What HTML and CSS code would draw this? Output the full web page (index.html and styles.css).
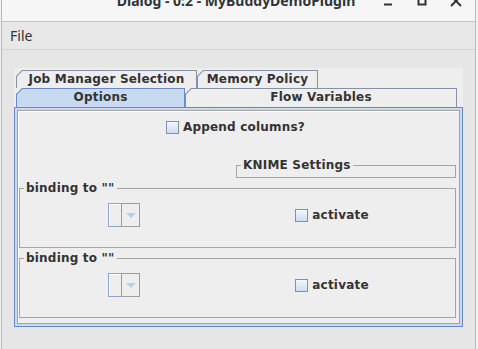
FILE: index.html
```html
<!DOCTYPE html>
<html lang="en">
<head>
    <meta charset="UTF-8">
    <meta name="viewport" content="width=device-width, initial-scale=1.0">
    <title>Dialog - 0:2 - MyBuddyDemoPlugin</title>
    <link rel="stylesheet" href="styles.css">
</head>
<body>
    <div class="window">
        <div class="titlebar">
            <span class="title">Dialog - 0:2 - MyBuddyDemoPlugin</span>
            <div class="controls">
                <svg class="ctl ctl-min" width="16" height="16" viewBox="0 0 16 16"><rect x="4" y="10.5" width="8" height="2" fill="#2e3436"/></svg>
                <svg class="ctl ctl-max" width="16" height="16" viewBox="0 0 16 16"><rect x="4.5" y="5" width="7" height="6.5" fill="none" stroke="#2e3436" stroke-width="2"/></svg>
                <svg class="ctl ctl-close" width="16" height="16" viewBox="0 0 16 16"><path d="M3 3 L13 13 M13 3 L3 13" stroke="#2e3436" stroke-width="2"/></svg>
            </div>
        </div>

        <div class="menubar">
            <span class="menu">File</span>
        </div>

        <div class="client">
            <div class="tabpane">
                <div class="tabrow">
                    <div class="tab tab-jobs"><span>Job Manager Selection</span></div>
                    <div class="tab tab-memory"><span>Memory Policy</span></div>
                </div>
                <div class="tabrow">
                    <div class="tab tab-options selected"><span>Options</span></div>
                    <div class="tab tab-flow"><span>Flow Variables</span></div>
                </div>

                <div class="tabbody">
                    <div class="panel">
                        <div class="append-row">
                            <label class="check"><span class="box"></span>Append columns?</label>
                        </div>

                        <div class="group knime">
                            <div class="group-title">KNIME Settings</div>
                        </div>

                        <div class="group binding">
                            <div class="group-title">binding to ""</div>
                            <div class="cells">
                                <div class="cell">
                                    <div class="combo"><span class="combo-field"></span><span class="combo-btn"><span class="arrow"></span></span></div>
                                </div>
                                <div class="cell">
                                    <label class="check"><span class="box"></span>activate</label>
                                </div>
                            </div>
                        </div>

                        <div class="group binding">
                            <div class="group-title">binding to ""</div>
                            <div class="cells">
                                <div class="cell">
                                    <div class="combo"><span class="combo-field"></span><span class="combo-btn"><span class="arrow"></span></span></div>
                                </div>
                                <div class="cell">
                                    <label class="check"><span class="box"></span>activate</label>
                                </div>
                            </div>
                        </div>
                    </div>
                </div>
            </div>
        </div>
    </div>
</body>
</html>
```

FILE: styles.css
```css
body {
    margin: 0;
    background-color: #f2f2f2;
    overflow: hidden;
}

.window {
    margin-left: 1px;
    width: 473px;
    height: 349px;
    border-left: 1px solid #b9b9b9;
    border-right: 1px solid #b9b9b9;
    background-color: #e6e6e6;
    display: flex;
    flex-direction: column;
}

/* title bar (clipped at the top) */
.titlebar {
    height: 21px;
    background-color: #f6f6f6;
    border-bottom: 1px solid #c4c4c4;
    display: flex;
    overflow: hidden;
}

.title {
    flex: 1;
    text-align: center;
    font-family: "Noto Sans", sans-serif;
    font-size: 14px;
    font-weight: bold;
    line-height: 20px;
    color: #2e3436;
    margin-top: -9px;
    padding-left: 90px;
    white-space: nowrap;
}

.controls {
    display: flex;
    gap: 18px;
    margin-top: -7px;
    padding-right: 11px;
}

.ctl {
    display: block;
}

.menubar {
    height: 27px;
    background-color: #e8e8e8;
    border-bottom: 1px solid #d2d2d2;
    display: flex;
    align-items: center;
}

.menu {
    font-family: "Noto Sans", sans-serif;
    font-size: 14px;
    color: #333;
    margin-left: 8px;
}

.client {
    flex: 1;
    padding: 18px 0 0 12px;
}

/* tabbed pane */
.tabpane {
    width: 449px;
    height: 259px;
    background-color: #eeeeee;
    padding-top: 2px;
    box-sizing: border-box;
    font-family: "DejaVu Sans", sans-serif;
    font-size: 12px;
    font-weight: bold;
    letter-spacing: 0.2px;
    color: #333;
}

.tabrow {
    display: flex;
    padding-left: 2px;
}

.tab {
    height: 18px;
    padding: 1px 1px 0 1px;
    box-sizing: border-box;
    background-color: #8192ab;
    clip-path: polygon(6px 0, 100% 0, 100% 100%, 0 100%, 0 6px);
}

.tab span {
    display: block;
    height: 100%;
    background-color: #eeeeee;
    clip-path: polygon(5.5px 0, 100% 0, 100% 100%, 0 100%, 0 5.5px);
    text-align: center;
    line-height: 17px;
}

.tab-jobs { width: 181px; }
.tab-memory { width: 121px; }
.tab-options { width: 169px; height: 19px; }
.tab-flow { width: 272px; height: 19px; }

.tab.selected {
    background-color: #6a8ac6;
}

.tab.selected span {
    background-color: #c8daf0;
}

.tabbody {
    height: 220px;
    box-sizing: border-box;
    border: 1px solid #6a8ac6;
    background-color: #c8daf0;
    padding: 2px;
}

.panel {
    height: 100%;
    box-sizing: border-box;
    border: 1px solid #a3a3a3;
    box-shadow: inset 1px 1px 0 #ffffff;
    background-color: #eeeeee;
    padding: 0 3px 0 1px;
}

.append-row {
    display: flex;
    justify-content: center;
    margin-top: 9px;
    height: 15px;
    padding-right: 4px;
}

.check {
    display: flex;
    align-items: center;
    gap: 4px;
    line-height: 15px;
}

.box {
    width: 13px;
    height: 13px;
    box-sizing: border-box;
    border: 1px solid #7e92ad;
    background: linear-gradient(#f4f7fb, #cddcee);
}

/* titled borders */
.group {
    border: 1px solid #a5a5a5;
    box-sizing: border-box;
}

.group-title {
    width: fit-content;
    height: 15px;
    line-height: 15px;
    margin: -8px 0 0 4px;
    padding: 0 2px;
    background-color: #eeeeee;
}

.knime {
    width: 220px;
    height: 13px;
    margin: 30px 0 0 auto;
}

.binding {
    height: 60px;
    margin-top: 10px;
}

.cells {
    display: grid;
    grid-template-columns: 208px 208px;
    margin-top: 7px;
    height: 24px;
}

.cell {
    display: flex;
    justify-content: center;
    align-items: center;
}

.combo {
    display: flex;
    width: 32px;
    height: 24px;
}

.combo-field {
    width: 12px;
    border: 1px solid #8ca6cb;
    border-right: none;
    box-shadow: inset 1px 1px 0 #ffffff;
    background-color: #eeeeee;
}

.combo-btn {
    flex: 1;
    border: 1px solid #9c9c9c;
    display: flex;
    align-items: center;
    justify-content: center;
}

.arrow {
    width: 0;
    height: 0;
    border-left: 5px solid transparent;
    border-right: 5px solid transparent;
    border-top: 5px solid #b7cfea;
}
```
